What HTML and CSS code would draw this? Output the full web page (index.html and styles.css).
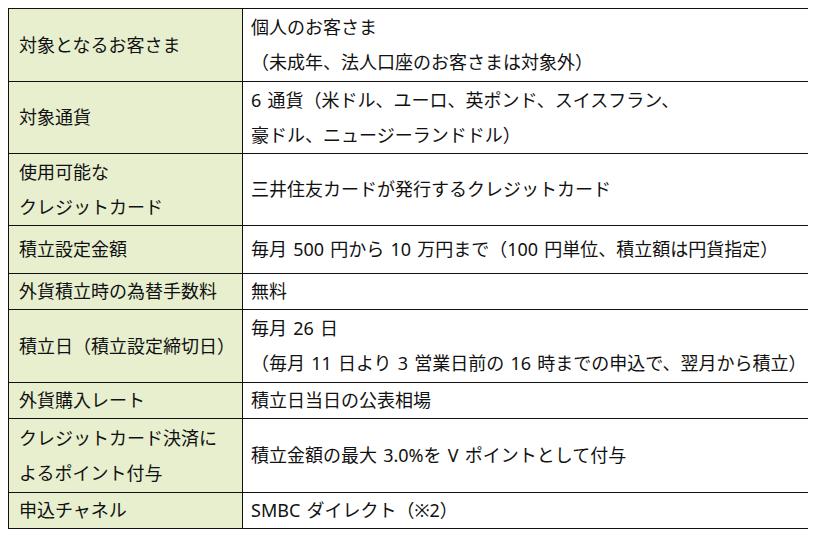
FILE: index.html
```html
<!DOCTYPE html>
<html lang="ja">
<head>
<meta charset="utf-8">
<title>外貨積立 概要</title>
<link rel="stylesheet" href="styles.css">
</head>
<body>
<table class="spec">
  <colgroup>
    <col class="c-label">
    <col class="c-value">
  </colgroup>
  <tbody>
    <tr class="h73">
      <th>対象となるお客さま</th>
      <td>個人のお客さま<br>（未成年、法人口座のお客さまは対象外）</td>
    </tr>
    <tr class="h72">
      <th>対象通貨</th>
      <td>6 通貨（米ドル、ユーロ、英ポンド、スイスフラン、<br>豪ドル、ニュージーランドドル）</td>
    </tr>
    <tr class="h72">
      <th>使用可能な<br>クレジットカード</th>
      <td>三井住友カードが発行するクレジットカード</td>
    </tr>
    <tr class="h48">
      <th>積立設定金額</th>
      <td>毎月 500 円から 10 万円まで（100 円単位、積立額は円貨指定）</td>
    </tr>
    <tr class="h36">
      <th>外貨積立時の為替手数料</th>
      <td>無料</td>
    </tr>
    <tr class="h73">
      <th>積立日（積立設定締切日）</th>
      <td>毎月 26 日<br>（毎月 11 日より 3 営業日前の 16 時までの申込で、翌月から積立）</td>
    </tr>
    <tr class="h36">
      <th>外貨購入レート</th>
      <td>積立日当日の公表相場</td>
    </tr>
    <tr class="h74">
      <th>クレジットカード決済に<br>よるポイント付与</th>
      <td>積立金額の最大 3.0%を V ポイントとして付与</td>
    </tr>
    <tr class="h36">
      <th>申込チャネル</th>
      <td>SMBC ダイレクト（※2）</td>
    </tr>
  </tbody>
</table>
</body>
</html>
```
FILE: styles.css
```css
html, body {
  background: #ffffff;
}
body {
  margin: 8px;
  font-family: "Noto Sans", "Noto Sans CJK JP", sans-serif;
  font-size: 18px;
  color: #111111;
}
.spec {
  border-collapse: collapse;
  width: 801px;
  table-layout: fixed;
}
.c-label { width: 234px; }
.c-value { width: 567px; }
.spec th,
.spec td {
  box-sizing: border-box;
  border: 1px solid #111111;
  padding: 0 4px 0 8px;
  line-height: 35px;
  font-weight: normal;
  text-align: left;
  vertical-align: middle;
  white-space: nowrap;
  word-spacing: 1.5px;
}
.spec th {
  padding-left: 10px;
  background: #e7efcf;
}
.spec td {
  background: #ffffff;
}
.h36 { height: 36px; }
.h48 { height: 48px; }
.h72 { height: 72px; }
.h73 { height: 73px; }
.h74 { height: 74px; }
```
